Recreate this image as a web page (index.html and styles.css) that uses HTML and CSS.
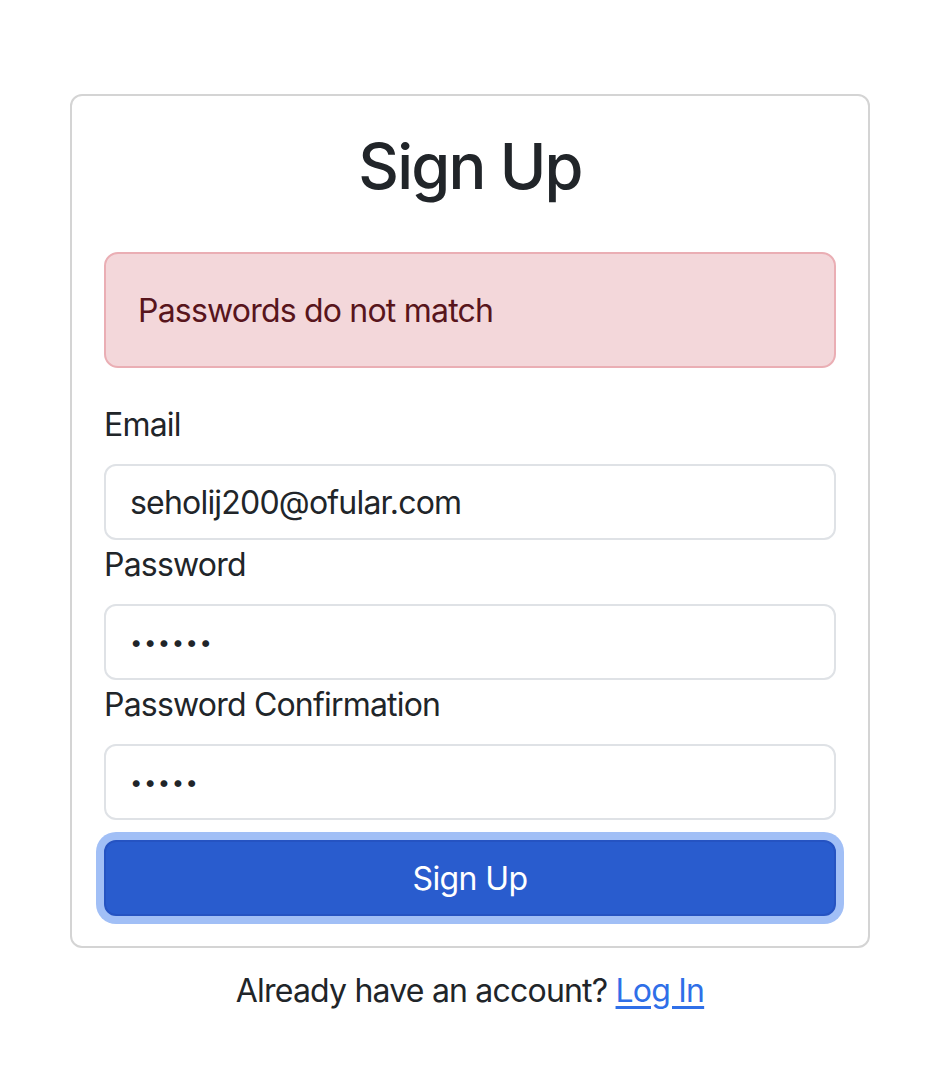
FILE: index.html
```html
<!DOCTYPE html>
<html lang="en">
<head>
<meta charset="utf-8">
<title>Sign Up</title>
<link rel="stylesheet" href="styles.css">
</head>
<body>
<main class="wrap">
  <section class="card">
    <h2 class="title">Sign Up</h2>
    <div class="alert">Passwords do not match</div>
    <form class="form">
      <div class="field">
        <label class="label" for="email">Email</label>
        <input class="control" id="email" type="email" value="seholij200@ofular.com">
      </div>
      <div class="field">
        <label class="label" for="pw">Password</label>
        <input class="control pw" id="pw" type="password" value="123456">
      </div>
      <div class="field">
        <label class="label" for="pwc">Password Confirmation</label>
        <input class="control pw" id="pwc" type="password" value="12345">
      </div>
      <button class="btn" type="button">Sign Up</button>
    </form>
  </section>
  <p class="footer">Already have an account? <a class="link" href="#">Log In</a></p>
</main>
</body>
</html>
```

FILE: styles.css
```css
html, body {
  margin: 0;
  padding: 0;
  background: #fff;
}
body {
  font-family: Inter, "Noto Sans", "Liberation Sans", sans-serif;
  color: #212529;
  font-size: 32px;
  line-height: 48px;
  letter-spacing: -0.8px;
}
.wrap {
  width: 800px;
  margin: 94px 0 0 70px;
}
.card {
  border: 2px solid #d4d4d4;
  border-radius: 12px;
  padding: 32px 32px 30px;
}
.title {
  margin: 0 0 48px;
  text-align: center;
  font-size: 63px;
  font-weight: 500;
  line-height: 76px;
  color: #212529;
  letter-spacing: -1.8px;
}
.alert {
  background: #f3d7da;
  border: 2px solid #eaaeb4;
  border-radius: 14px;
  color: #58151c;
  padding: 33px 32px 31px;
  margin-bottom: 32px;
}
.form {
  display: flex;
  flex-direction: column;
}
.field {
  display: flex;
  flex-direction: column;
}
.label {
  margin-bottom: 16px;
  padding-top: 1px;
  height: 47px;
}
.control {
  height: 76px;
  box-sizing: border-box;
  border: 2px solid #dfe2e6;
  border-radius: 12px;
  padding: 0 24px;
  font-family: inherit;
  font-size: 32px;
  color: #212529;
  background: #fff;
  outline: none;
  letter-spacing: -0.8px;
}
.pw {
  font-size: 22px;
  letter-spacing: 1.5px;
}
.btn {
  margin-top: 20px;
  height: 76px;
  border: 2px solid #2553c2;
  border-radius: 12px;
  background: #295cce;
  color: #fff;
  font-family: inherit;
  font-size: 32px;
  letter-spacing: -0.6px;
  box-shadow: 0 0 0 8px #a1bff6;
  cursor: pointer;
}
.footer {
  margin: 19px 0 0;
  text-align: center;
}
.link {
  color: #2f6fe8;
  text-decoration: underline;
  text-underline-offset: 4px;
}
```
